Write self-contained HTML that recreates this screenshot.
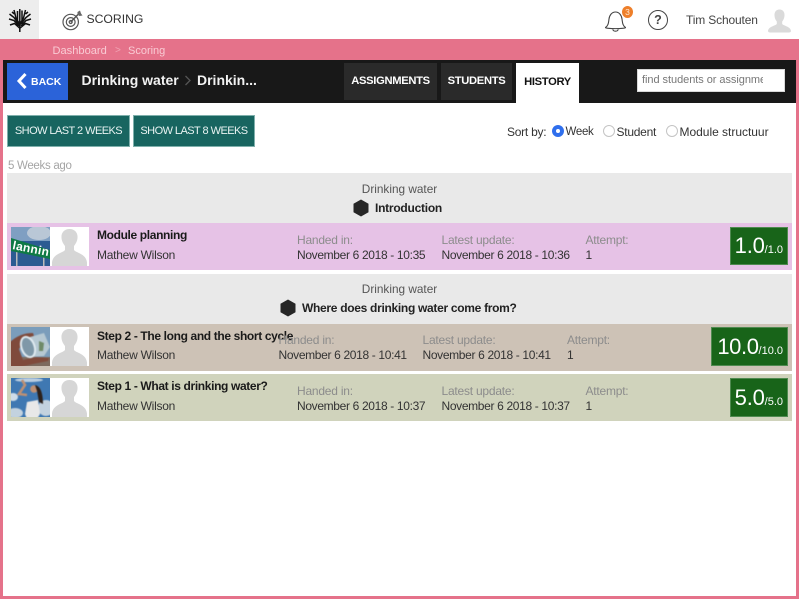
<!DOCTYPE html>
<html><head><meta charset="utf-8"><style>
html,body{margin:0;padding:0}
body{width:799px;height:599px;position:relative;overflow:hidden;background:#fff;font-family:"Liberation Sans",sans-serif;color:#222}
.a{position:absolute;white-space:nowrap}
.l{font-size:12px;color:#8c8c8c;line-height:16px;letter-spacing:-.22px}
.v{font-size:12px;color:#333;line-height:16px;letter-spacing:-.34px}
.t{font-size:12px;font-weight:bold;color:#1a1a1a;line-height:16px;letter-spacing:-.36px}
.n{font-size:12px;color:#333;line-height:16px;letter-spacing:-.25px}
.g{background:#186419;color:#fff;display:block;text-align:right;box-sizing:border-box;padding-right:4px;border:1px solid #4f8a50}
.g b{font-weight:normal;font-size:22px;letter-spacing:-.2px}
.g i{font-style:normal;font-size:11px}
.tab{background:#2a2a2a;color:#fff;font-weight:bold;font-size:11.2px;text-align:center;line-height:37px;letter-spacing:-.32px}
.btn{background:#186560;color:#e9f3f2;font-size:11px;text-align:center;line-height:30px;box-sizing:border-box;border:1px solid #7fb0ac;letter-spacing:-.55px}
.rad{width:10px;height:10px;border:1px solid #c4c4c4;border-radius:50%;background:#fff}
.s{font-size:12px;line-height:16px;color:#333;margin-top:1px}
</style></head><body>

<!-- pink frame -->
<div class="a" style="left:0;top:39px;width:799px;height:560px;background:#e5728a"></div>
<div class="a" style="left:3px;top:60px;width:793px;height:536px;background:#fff"></div>

<!-- header -->
<div class="a" style="left:0;top:0;width:39px;height:39px;background:#ededed"></div>
<svg class="a" style="left:8px;top:7px" width="24" height="26" viewBox="0 0 24 26" fill="none" stroke="#111" stroke-width="1.5">
<path d="M11.800 2V25M9.500 4V14L11.800 18M14 3.500V14L11.800 18M6 3L8 11 11 16M17.500 3L15.500 11 12.500 16M1.500 7L6 10.500 10.500 17M22.500 7L18 10.500 13 17M1 12L6 13.500 11 19M23 12L18 13.500 13 19M2 18L6.500 16.500 11.500 21M22 18L17.500 16.500 12 21M4 5L6.500 7M20 5L17.500 7"/>
</svg>
<svg class="a" style="left:62px;top:9px" width="22" height="22" viewBox="0 0 22 22" fill="none" stroke="#555" stroke-width="1.200">
<circle cx="8.700" cy="13" r="7.700"/><circle cx="8.700" cy="13" r="4.400"/><circle cx="8.700" cy="13" r="1.500"/>
<path d="M8.700 13L17 4.500" stroke-width="1.600"/><path d="M15.500 3L15.500 5.500 17.500 7 20.500 6.500 19 4.500 18 1.500Z" fill="#666" stroke="none"/>
</svg>
<div class="a" style="left:86.500px;top:11px;font-size:12.200px;line-height:16px;color:#333">SCORING</div>

<svg class="a" style="left:604px;top:9px" width="24" height="24" viewBox="0 0 24 24" fill="none" stroke="#444" stroke-width="1.100">
<path d="M1.500 18.500C4.500 16.500 4.500 13.500 5 10 5.500 6 8 3 11.500 3 15 3 17.500 6 18 10 18.500 13.500 18.500 16.500 21.500 18.500 22 20 1 20 1.500 18.500Z"/><path d="M8.800 20.300C9.300 22.800 13.700 22.800 14.200 20.300"/>
</svg>
<div class="a" style="left:622px;top:6px;width:11px;height:12px;border-radius:50%;background:#ee7f2a;color:#ffe9d4;font-size:8.500px;line-height:12px;text-align:center">3</div>
<div class="a" style="left:648px;top:10px;width:18px;height:18px;border:1.300px solid #444;border-radius:50%;color:#444;font-size:12.500px;font-weight:bold;line-height:18px;text-align:center">?</div>
<div class="a" style="left:686px;top:12px;font-size:12px;line-height:16px;color:#444;letter-spacing:-.15px">Tim Schouten</div>
<svg class="a" style="left:767px;top:9px" width="25" height="24" viewBox="0 0 25 24"><path d="M12.500 0.500C9 0.500 7.300 3 7.500 6.500 7.600 9 8.500 11 9.800 12.500V15C8 17 1.500 17.500 1 22 1 23 2 23.500 3 23.500H22C23 23.500 24 23 24 22 23.500 17.500 17 17 15.200 15V12.500C16.500 11 17.400 9 17.500 6.500 17.700 3 16 0.500 12.500 0.500Z" fill="#dadada"/></svg>

<!-- breadcrumb -->
<div class="a" style="left:52.500px;top:43px;font-size:11.100px;line-height:16px;color:#f9cbd4">Dashboard</div>
<div class="a" style="left:115px;top:43px;font-size:10px;line-height:16px;color:#f1a4b4">&gt;</div>
<div class="a" style="left:128px;top:43px;font-size:11px;line-height:16px;color:#f9cbd4">Scoring</div>

<!-- black bar -->
<div class="a" style="left:3px;top:60px;width:793px;height:43px;background:#181818"></div>
<div class="a" style="left:7px;top:63px;width:61px;height:37px;background:#2b63d9"></div>
<svg class="a" style="left:16px;top:72px" width="12" height="18" viewBox="0 0 12 18"><path d="M9.500 2L3 9 9.500 16" fill="none" stroke="#fff" stroke-width="3"/></svg>
<div class="a" style="left:31px;top:74px;font-size:10.500px;font-weight:bold;line-height:16px;color:#fff">BACK</div>
<div class="a" style="left:81.500px;top:71px;font-size:14px;font-weight:bold;line-height:18px;color:#f2f2f2">Drinking water</div>
<svg class="a" style="left:184px;top:75px" width="8" height="11" viewBox="0 0 8 11"><path d="M1.500 1L6 5.500 1.500 10" fill="none" stroke="#555" stroke-width="1.300"/></svg>
<div class="a" style="left:197px;top:71px;font-size:14px;font-weight:bold;line-height:18px;color:#f2f2f2">Drinkin...</div>

<div class="a tab" style="left:344px;top:63px;width:93px;height:37px">ASSIGNMENTS</div>
<div class="a tab" style="left:441px;top:63px;width:71px;height:37px">STUDENTS</div>
<div class="a tab" style="left:516px;top:63px;width:63px;height:41px;background:#fff;color:#111;line-height:38px">HISTORY</div>
<div class="a" style="left:637px;top:69px;width:148px;height:23px;background:#fff;box-sizing:border-box;border:1px solid #d8d8d8;padding-left:4px;font-size:11px;line-height:21px;color:#777;overflow:hidden"><span style="display:block;width:121px;overflow:hidden;letter-spacing:-.05px">find students or assignments</span></div>

<!-- filters -->
<div class="a btn" style="left:7px;top:115px;width:123px;height:32px">SHOW LAST 2 WEEKS</div>
<div class="a btn" style="left:133px;top:115px;width:122px;height:32px">SHOW LAST 8 WEEKS</div>

<div class="a s" style="left:507px;top:123px;letter-spacing:-.25px">Sort by:</div>
<div class="a" style="left:552px;top:125px;width:12px;height:12px;border-radius:50%;background:#2f6fed"></div>
<div class="a" style="left:556px;top:129px;width:4px;height:4px;border-radius:50%;background:#fff"></div>
<div class="a s" style="left:565.500px;top:123px;font-size:11.500px;letter-spacing:-.3px">Week</div>
<div class="a rad" style="left:603px;top:125px"></div>
<div class="a s" style="left:616.500px;top:123px;letter-spacing:-.25px">Student</div>
<div class="a rad" style="left:666px;top:125px"></div>
<div class="a s" style="left:679.500px;top:123px;letter-spacing:-.02px">Module structuur</div>

<div class="a" style="left:8px;top:158px;font-size:11.500px;line-height:16px;color:#a5a5a5;letter-spacing:-.3px">5 Weeks ago</div>

<!-- group 1 -->
<div class="a" style="left:7px;top:173px;width:785px;height:50px;background:#e9e9e9"></div>
<div class="a" style="left:7px;top:181px;width:785px;text-align:center;font-size:11.800px;line-height:16px;color:#555">Drinking water</div>
<svg class="a" style="left:353px;top:199px" width="16" height="18" viewBox="0 0 16 18"><path d="M8 .5L15.500 4.700V13.300L8 17.500 .5 13.300V4.700Z" fill="#262626"/></svg>
<div class="a" style="left:375px;top:200px;font-size:12px;font-weight:bold;line-height:16px;color:#222;letter-spacing:-.25px">Introduction</div>

<!-- row 1 -->
<div class="a" style="left:7px;top:223px;width:785px;height:47px;background:#e6c2e6"></div>
<svg class="a" style="left:11px;top:227px" width="39" height="39" viewBox="0 0 39 39">
<rect width="39" height="39" fill="#2c5b92"/><rect width="39" height="14" fill="#7f9fc2"/><ellipse cx="28" cy="6" rx="12" ry="7" fill="#b9c7d6"/><rect x="5" y="20" width="1.500" height="19" fill="#bbb"/><rect x="32" y="26" width="1.500" height="13" fill="#bbb"/>
<path d="M0 11L39 23V32L0 24Z" fill="#0f7a45"/>
<text x="1" y="22" transform="rotate(11 1 22)" font-family="Liberation Sans,sans-serif" font-size="12" font-weight="bold" fill="#fff" letter-spacing=".3">lannin</text></svg>
<div class="a" style="left:50px;top:227px;width:39px;height:39px;background:#fff"></div>
<svg class="a" style="left:50px;top:227px" width="39" height="39" viewBox="0 0 39 39"><path d="M19.500 2C14 2 11 6 11.500 11 11.800 14.500 13.500 17 15 19V23C13 26 3 26.500 2 35.500V39H37V35.500C36 26.500 26 26 24 23V19C25.500 17 27.200 14.500 27.500 11 28 6 25 2 19.500 2Z" fill="#d6d6d6"/></svg>
<div class="a t" style="left:97px;top:227px">Module planning</div>
<div class="a n" style="left:97px;top:247px">Mathew Wilson</div>
<div class="a l" style="left:297px;top:232px">Handed in:</div>
<div class="a v" style="left:297px;top:247px">November 6 2018 - 10:35</div>
<div class="a l" style="left:441.500px;top:232px">Latest update:</div>
<div class="a v" style="left:441.500px;top:247px">November 6 2018 - 10:36</div>
<div class="a l" style="left:585.500px;top:232px">Attempt:</div>
<div class="a v" style="left:585.500px;top:247px">1</div>
<div class="a g" style="left:730px;top:227px;width:58px;height:38px;line-height:36px"><b>1.0</b><i>/1.0</i></div>

<!-- group 2 -->
<div class="a" style="left:7px;top:274px;width:785px;height:50px;background:#e9e9e9"></div>
<div class="a" style="left:7px;top:281px;width:785px;text-align:center;font-size:11.800px;line-height:16px;color:#555">Drinking water</div>
<svg class="a" style="left:280px;top:299px" width="16" height="18" viewBox="0 0 16 18"><path d="M8 .5L15.500 4.700V13.300L8 17.500 .5 13.300V4.700Z" fill="#262626"/></svg>
<div class="a" style="left:302px;top:300px;font-size:12px;font-weight:bold;line-height:16px;color:#222;letter-spacing:-.3px">Where does drinking water come from?</div>

<!-- row 2 -->
<div class="a" style="left:7px;top:324px;width:785px;height:47px;background:#cdc2b6"></div>
<svg class="a" style="left:11px;top:327px" width="39" height="39" viewBox="0 0 39 39"><g style="filter:blur(.5px)">
<rect x="-2" y="-2" width="43" height="43" fill="#7b9dbb"/><rect y="30" width="41" height="11" fill="#7d6a5e"/>
<path d="M-2 16C5 9 13 6 22 6L23 9 15 12 8 22 12 33 25 30 38 31 37 34 22 37 5 41H-2Z" fill="#7f4a3b"/>
<path d="M12 12L33 6 39 20 33 29 19 30C12 27 9 19 12 12Z" fill="#b6c8d2"/><ellipse cx="17" cy="20" rx="6.500" ry="10.500" transform="rotate(-20 17 20)" fill="#7f98a8" stroke="#dfe9ef" stroke-width="2"/><path d="M28 14L33 16 32 24 28 24Z" fill="#6f8a68"/></g></svg>
<div class="a" style="left:50px;top:327px;width:39px;height:39px;background:#fff"></div>
<svg class="a" style="left:50px;top:327px" width="39" height="39" viewBox="0 0 39 39"><path d="M19.500 2C14 2 11 6 11.500 11 11.800 14.500 13.500 17 15 19V23C13 26 3 26.500 2 35.500V39H37V35.500C36 26.500 26 26 24 23V19C25.500 17 27.200 14.500 27.500 11 28 6 25 2 19.500 2Z" fill="#d6d6d6"/></svg>
<div class="a t" style="left:97px;top:328px">Step 2 - The long and the short cycle</div>
<div class="a n" style="left:97px;top:347px">Mathew Wilson</div>
<div class="a l" style="left:278.500px;top:332px">Handed in:</div>
<div class="a v" style="left:278.500px;top:347px">November 6 2018 - 10:41</div>
<div class="a l" style="left:422.500px;top:332px">Latest update:</div>
<div class="a v" style="left:422.500px;top:347px">November 6 2018 - 10:41</div>
<div class="a l" style="left:567px;top:332px">Attempt:</div>
<div class="a v" style="left:567px;top:347px">1</div>
<div class="a g" style="left:711px;top:327px;width:77px;height:39px;line-height:37px"><b style="letter-spacing:-.4px">10.0</b><i>/10.0</i></div>

<!-- row 3 -->
<div class="a" style="left:7px;top:374px;width:785px;height:47px;background:#d0d3bc"></div>
<svg class="a" style="left:11px;top:378px" width="39" height="39" viewBox="0 0 39 39"><g style="filter:blur(.5px)">
<rect x="-2" y="-2" width="43" height="43" fill="#3f78b2"/><ellipse cx="2" cy="19" rx="5" ry="4" fill="#cfdce8"/><ellipse cx="35" cy="30" rx="8" ry="8" fill="#c3d2df"/><ellipse cx="18" cy="2" rx="14" ry="2" fill="#b9cde0"/><ellipse cx="4" cy="35" rx="8" ry="5" fill="#c3d2df"/>
<path d="M11 2L14 7 8 16 16 17" fill="none" stroke="#bd9074" stroke-width="2.600"/><circle cx="23" cy="11" r="3.800" fill="#bd9074"/><path d="M24 7C29 8 32 14 32 26L28 24 26 13Z" fill="#2c211b"/><path d="M16 24L27 22 29 36 26 41H16L14 36Z" fill="#e8e8e8"/></g></svg>
<div class="a" style="left:50px;top:378px;width:39px;height:39px;background:#fff"></div>
<svg class="a" style="left:50px;top:378px" width="39" height="39" viewBox="0 0 39 39"><path d="M19.500 2C14 2 11 6 11.500 11 11.800 14.500 13.500 17 15 19V23C13 26 3 26.500 2 35.500V39H37V35.500C36 26.500 26 26 24 23V19C25.500 17 27.200 14.500 27.500 11 28 6 25 2 19.500 2Z" fill="#d6d6d6"/></svg>
<div class="a t" style="left:97px;top:378px">Step 1 - What is drinking water?</div>
<div class="a n" style="left:97px;top:398px">Mathew Wilson</div>
<div class="a l" style="left:297px;top:383px">Handed in:</div>
<div class="a v" style="left:297px;top:398px">November 6 2018 - 10:37</div>
<div class="a l" style="left:441.500px;top:383px">Latest update:</div>
<div class="a v" style="left:441.500px;top:398px">November 6 2018 - 10:37</div>
<div class="a l" style="left:585.500px;top:383px">Attempt:</div>
<div class="a v" style="left:585.500px;top:398px">1</div>
<div class="a g" style="left:730px;top:378px;width:58px;height:39px;line-height:37px"><b>5.0</b><i>/5.0</i></div>

</body></html>
